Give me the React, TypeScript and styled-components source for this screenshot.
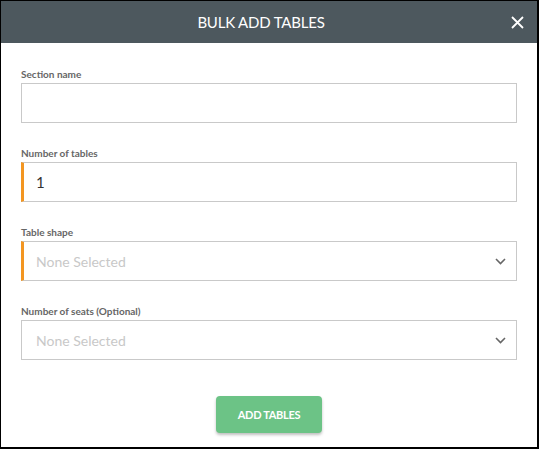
import React, { useState } from 'react';
import styled, { createGlobalStyle } from 'styled-components';

const GlobalStyle = createGlobalStyle`
  html, body {
    margin: 0;
    padding: 0;
    background: #000;
  }
  body {
    font-family: Lato, "Open Sans", Arial, sans-serif;
  }
`

const Dialog = styled.div`
  margin: 1px 0 0 1px;
  width: 536px;
  height: 446px;
  background: #fff;
  display: flex;
  flex-direction: column;
`

const Header = styled.div`
  height: 42px;
  background: #4d585e;
  display: flex;
  align-items: center;
  padding-right: 13px;
`

const Title = styled.div`
  flex: 1;
  padding-left: 10px;
  text-align: center;
  color: #fff;
  font-size: 15px;
  letter-spacing: -0.2px;
`

const CloseButton = styled.button`
  width: 13px;
  height: 13px;
  padding: 0;
  border: none;
  background: none;
  display: flex;
  cursor: pointer;
`

const Form = styled.div`
  flex: 1;
  display: flex;
  flex-direction: column;
  padding: 25px 20px 14px;
  gap: 24px;
`

const Field = styled.div`
  display: flex;
  flex-direction: column;
`

const Label = styled.label`
  font-size: 10px;
  line-height: 12px;
  font-weight: 700;
  color: #666;
  margin-bottom: 3px;
`

const Box = styled.div<{ $required?: boolean }>`
  position: relative;
  height: 40px;
  box-sizing: border-box;
  border: 1px solid #c9c9c9;
  border-left: ${p => p.$required ? '3px solid #f39621' : '1px solid #c9c9c9'};
  display: flex;
  align-items: center;
  padding-left: ${p => p.$required ? '12px' : '14px'};
  padding-right: 10px;
`

const TextInput = styled.input`
  flex: 1;
  border: none;
  outline: none;
  padding: 0;
  font-family: Lato, Arial, sans-serif;
  font-size: 15px;
  color: #333;
  background: transparent;
`

const Placeholder = styled.span`
  flex: 1;
  font-size: 14px;
  color: #c8c8c8;
`

const Footer = styled.div`
  display: flex;
  justify-content: center;
  margin-top: 12px;
`

const AddButton = styled.button`
  width: 106px;
  height: 37px;
  border: none;
  border-radius: 4px;
  background: #6cc386;
  color: #fff;
  font-family: Lato, Arial, sans-serif;
  font-size: 11px;
  font-weight: 700;
  letter-spacing: -0.3px;
  box-shadow: 0 2px 3px rgba(0, 0, 0, 0.25);
  cursor: pointer;
`

const Chevron = () => (
  <svg width="11" height="7" viewBox="0 0 11 7">
    <path d="M1 1 L5.5 5.5 L10 1" fill="none" stroke="#666" strokeWidth="1.6" />
  </svg>
)

const CloseIcon = () => (
  <svg width="13" height="13" viewBox="0 0 13 13">
    <path d="M1 1 L12 12 M12 1 L1 12" stroke="#fff" strokeWidth="1.8" />
  </svg>
)

const App: React.FC = () => {
  const [section, setSection] = useState('');
  const [count, setCount] = useState('1');

  return <>
    <GlobalStyle />
    <Dialog>
      <Header>
        <Title>BULK ADD TABLES</Title>
        <CloseButton aria-label="close"><CloseIcon /></CloseButton>
      </Header>
      <Form>
        <Field>
          <Label>Section name</Label>
          <Box>
            <TextInput value={section} onChange={e => setSection(e.target.value)} />
          </Box>
        </Field>
        <Field>
          <Label>Number of tables</Label>
          <Box $required>
            <TextInput value={count} onChange={e => setCount(e.target.value)} />
          </Box>
        </Field>
        <Field>
          <Label>Table shape</Label>
          <Box $required>
            <Placeholder>None Selected</Placeholder>
            <Chevron />
          </Box>
        </Field>
        <Field>
          <Label>Number of seats (Optional)</Label>
          <Box>
            <Placeholder>None Selected</Placeholder>
            <Chevron />
          </Box>
        </Field>
        <Footer>
          <AddButton>ADD TABLES</AddButton>
        </Footer>
      </Form>
    </Dialog>
  </>;
}

export default App;
